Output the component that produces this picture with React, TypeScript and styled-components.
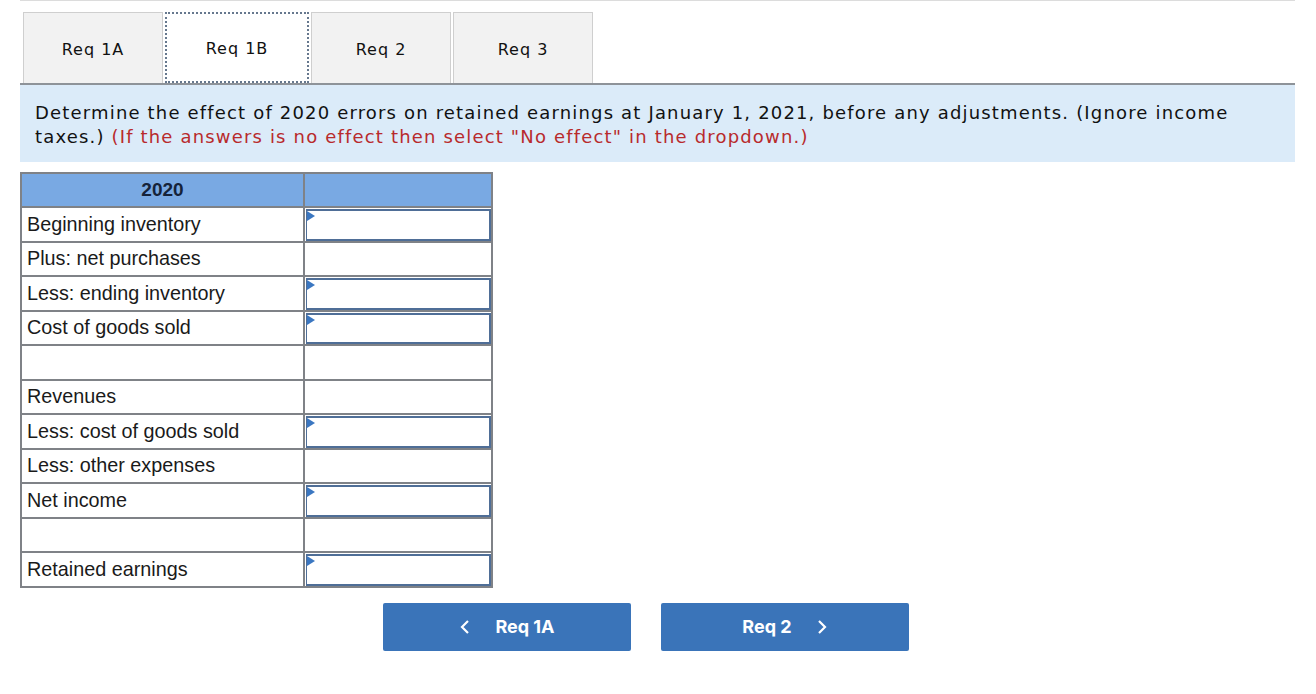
import React from "react";
import styled, { createGlobalStyle } from "styled-components";

const Global = createGlobalStyle`
  html, body { margin: 0; padding: 0; background: #fff; }
  body { font-family: "DejaVu Sans", sans-serif; }
`;

const Page = styled.div`
  width: 1275px;
  margin-left: 20px;
  border-top: 1px solid #dcdcdc;
`;

const TabBar = styled.div`
  display: flex;
  gap: 2px;
  padding: 11px 0 0 3px;
  border-bottom: 2px solid #8e9399;
`;

const Tab = styled.div<{ $active?: boolean }>`
  width: ${(p) => (p.$active ? 144 : 140)}px;
  height: 71px;
  box-sizing: border-box;
  display: flex;
  align-items: center;
  justify-content: center;
  font-family: "DejaVu Sans", sans-serif;
  font-size: 16px;
  letter-spacing: 1px;
  color: #111;
  background: ${(p) => (p.$active ? "#fff" : "#f2f2f2")};
  border: ${(p) => (p.$active ? "2px dotted #66788e" : "1px solid #cfcfcf")};
  border-bottom: ${(p) => (p.$active ? "2px dotted #66788e" : "none")};
  margin-bottom: ${(p) => (p.$active ? "-2px" : "0")};
  padding-top: 2px;
`;

const Instructions = styled.div`
  background: #dbebf9;
  padding: 16px 15px 13px 15px;
  font-family: "DejaVu Sans", sans-serif;
  font-size: 18px;
  letter-spacing: 1.17px;
  line-height: 24px;
  color: #111;
`;

const Red = styled.span`
  color: #b82a2c;
`;

const Table = styled.table`
  margin-top: 10px;
  border-collapse: collapse;
  width: 473px;
  font-family: "Liberation Sans", Arial, sans-serif;
  font-size: 19.8px;
  color: #1a1a1a;
`;

const HeadCell = styled.th`
  background: #79a9e3;
  border: 2px solid #7f8287;
  height: 32px;
  padding: 0;
  font-weight: 700;
  font-size: 19px;
  color: #15233a;
  text-align: center;
`;

const LabelCell = styled.td`
  border: 2px solid #7f8287;
  width: 276px;
  height: 32.5px;
  padding: 0 0 0 5px;
  white-space: nowrap;
`;

const ValueCell = styled.td`
  border: 2px solid #7f8287;
  padding: 0;
  height: 32.5px;
  position: relative;
`;

const Dropdown = styled.div`
  position: absolute;
  inset: 1px 0 0 1px;
  border: 2px solid #4f6e97;
  border-left-width: 1px;
  background: #fff;
`;

const Marker = styled.span`
  position: absolute;
  top: 0;
  left: 0;
  width: 0;
  height: 0;
  border-top: 5px solid transparent;
  border-bottom: 5px solid transparent;
  border-left: 8px solid #3b77c1;
`;

const Nav = styled.div`
  display: flex;
  gap: 30px;
  padding: 15px 0 0 363px;
`;

const NavButton = styled.button`
  width: 248px;
  height: 48px;
  border: none;
  border-radius: 2px;
  background: #3a74b9;
  color: #fff;
  font-family: Inter, Roboto, sans-serif;
  font-weight: 700;
  font-size: 18px;
  display: flex;
  align-items: center;
  justify-content: center;
  gap: 24px;
  padding: 0;
  cursor: pointer;
`;

const Chevron = styled.svg`
  width: 12px;
  height: 16px;
`;

const rows: { label: string; dd: boolean }[] = [
  { label: "Beginning inventory", dd: true },
  { label: "Plus: net purchases", dd: false },
  { label: "Less: ending inventory", dd: true },
  { label: "Cost of goods sold", dd: true },
  { label: "", dd: false },
  { label: "Revenues", dd: false },
  { label: "Less: cost of goods sold", dd: true },
  { label: "Less: other expenses", dd: false },
  { label: "Net income", dd: true },
  { label: "", dd: false },
  { label: "Retained earnings", dd: true },
];

export default function App() {
  return (
    <>
      <Global />
      <Page>
        <TabBar>
          <Tab>Req 1A</Tab>
          <Tab $active>Req 1B</Tab>
          <Tab>Req 2</Tab>
          <Tab>Req 3</Tab>
        </TabBar>
        <Instructions>
          Determine the effect of 2020 errors on retained earnings at January 1, 2021, before any adjustments. (Ignore income
          <br />
          taxes.) <Red>(If the answers is no effect then select "No effect" in the dropdown.)</Red>
        </Instructions>
        <Table>
          <thead>
            <tr>
              <HeadCell>2020</HeadCell>
              <HeadCell></HeadCell>
            </tr>
          </thead>
          <tbody>
            {rows.map((r, i) => (
              <tr key={i}>
                <LabelCell>{r.label}</LabelCell>
                <ValueCell>
                  {r.dd && (
                    <Dropdown>
                      <Marker />
                    </Dropdown>
                  )}
                </ValueCell>
              </tr>
            ))}
          </tbody>
        </Table>
        <Nav>
          <NavButton>
            <Chevron viewBox="0 0 12 16">
              <path d="M9 2 L3 8 L9 14" fill="none" stroke="#fff" strokeWidth="2.2" />
            </Chevron>
            <span>Req 1A</span>
          </NavButton>
          <NavButton>
            <span>Req 2</span>
            <Chevron viewBox="0 0 12 16">
              <path d="M3 2 L9 8 L3 14" fill="none" stroke="#fff" strokeWidth="2.2" />
            </Chevron>
          </NavButton>
        </Nav>
      </Page>
    </>
  );
}
